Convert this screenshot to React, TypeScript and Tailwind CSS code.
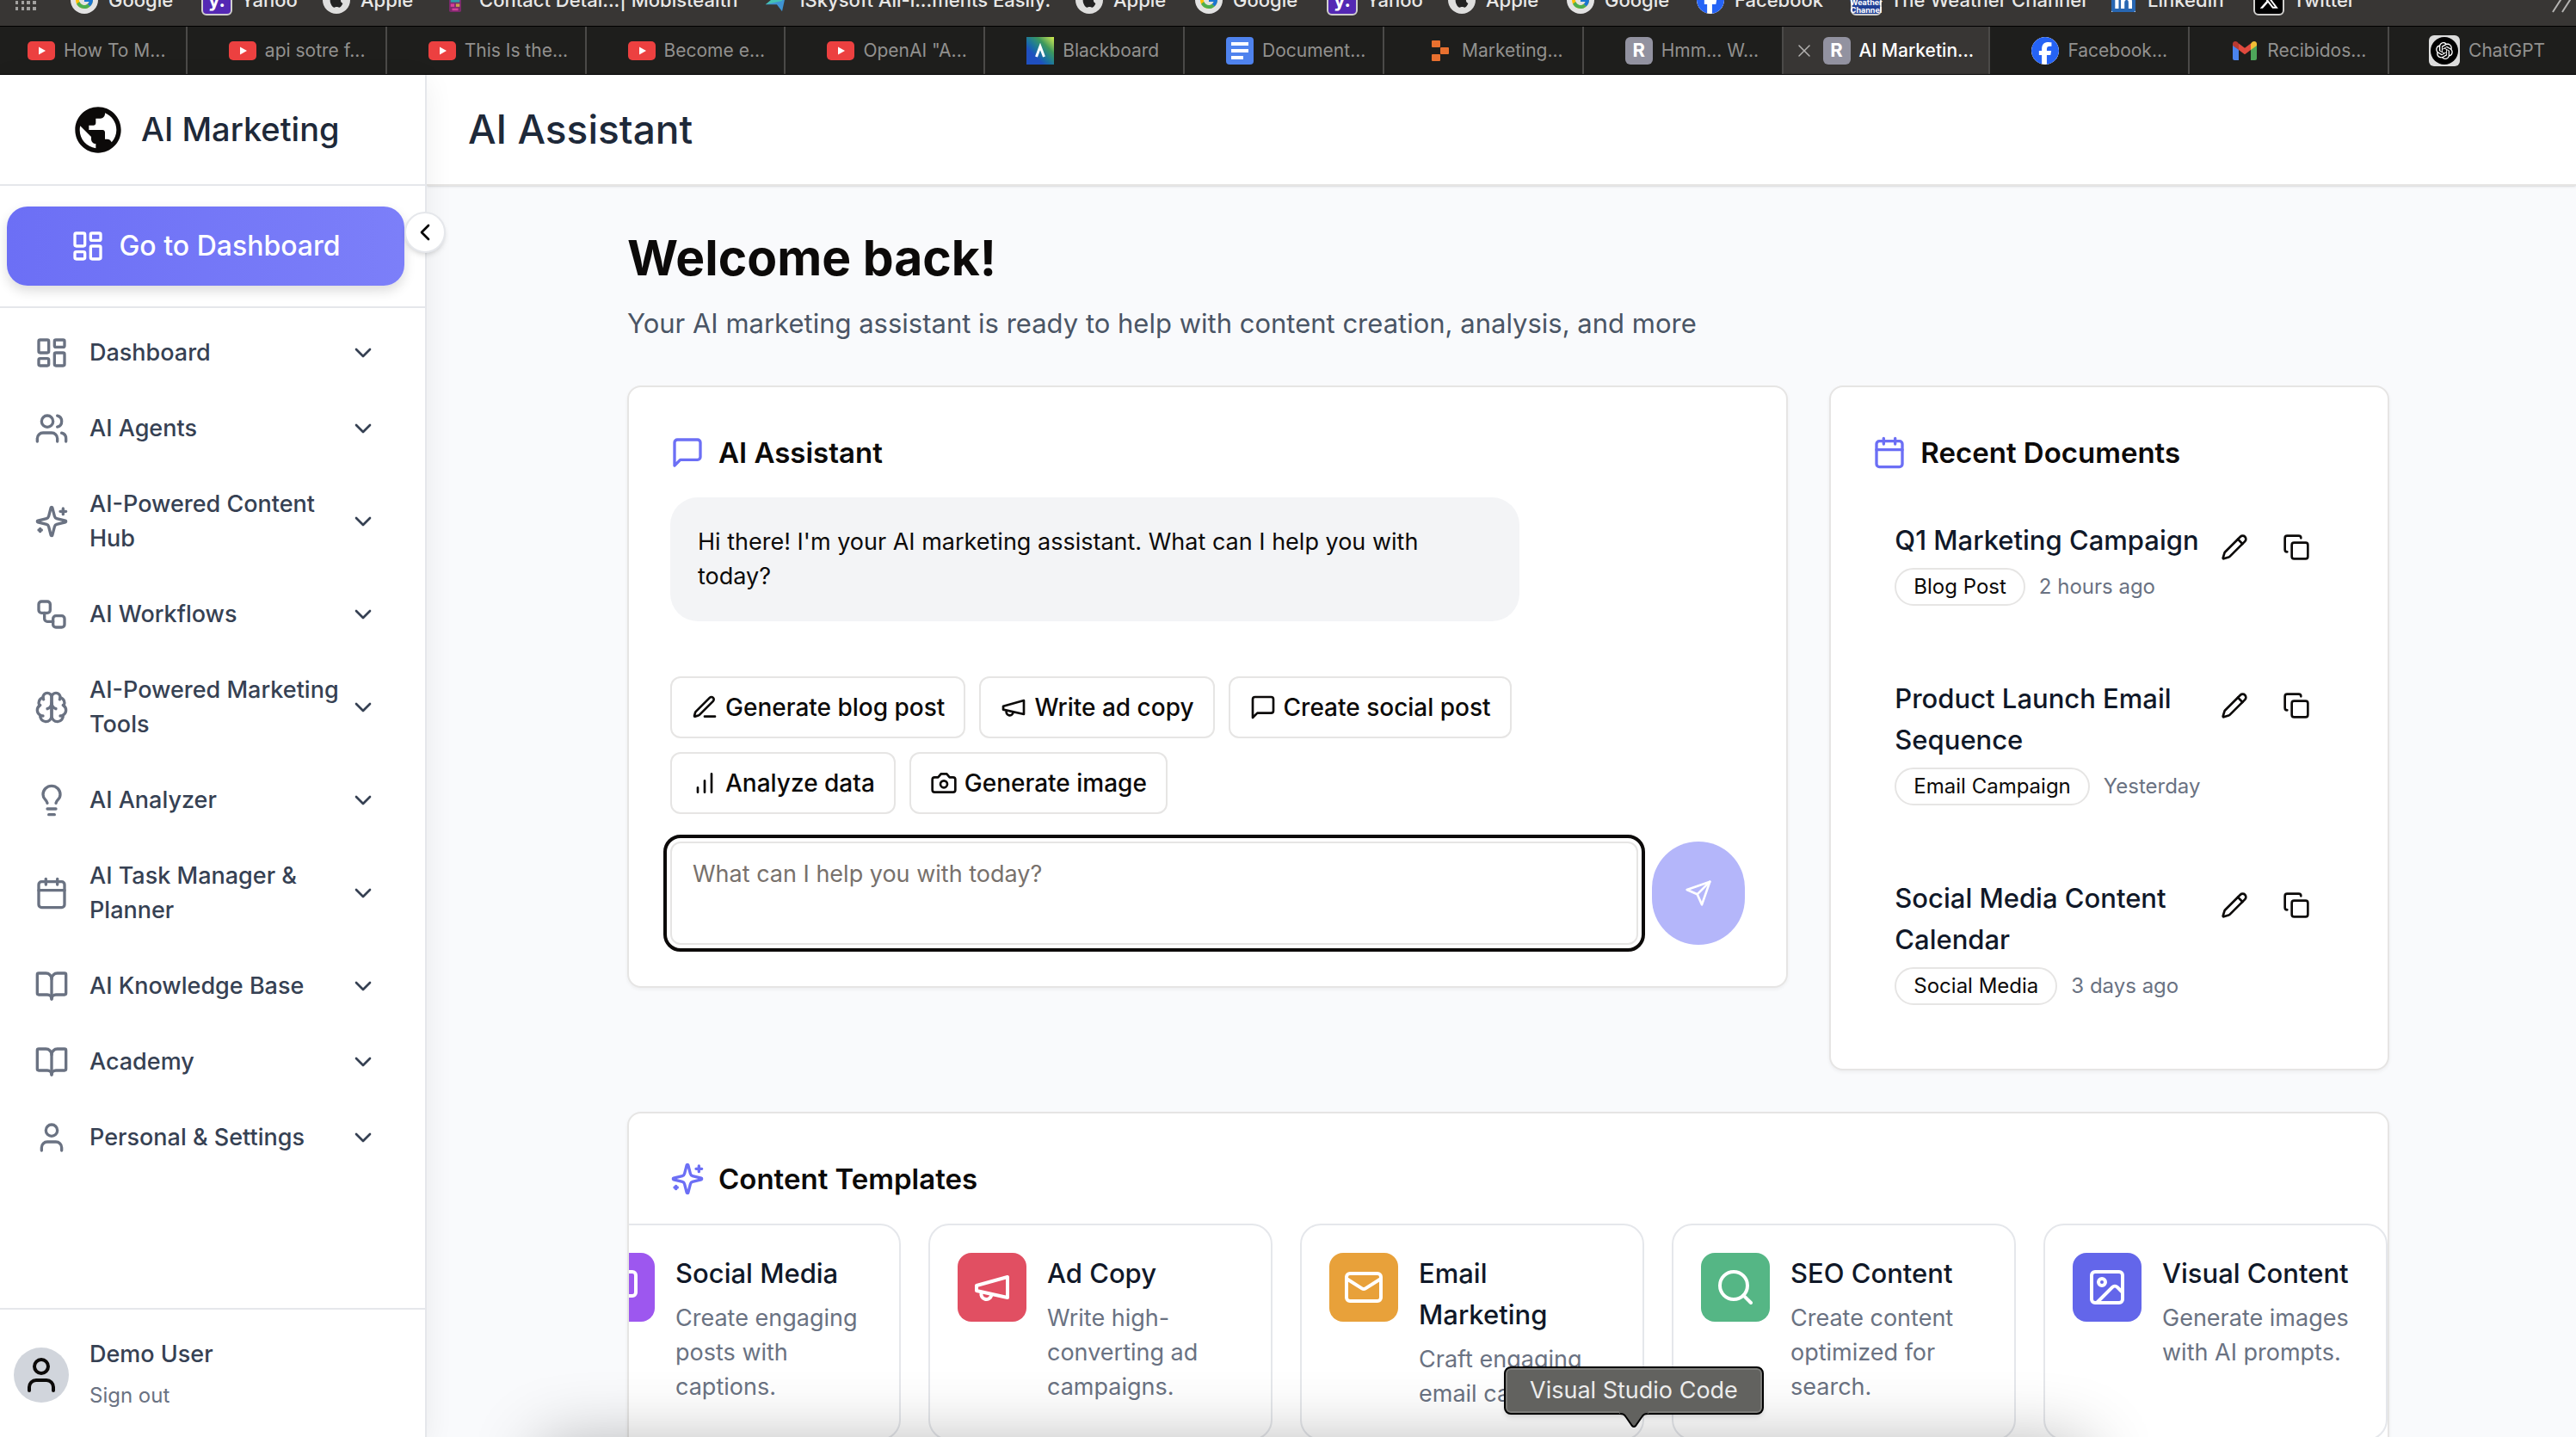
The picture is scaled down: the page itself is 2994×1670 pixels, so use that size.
import React from "react";
import {
  Calendar,
  ChevronDown,
  ChevronLeft,
  BookOpen,
  Copy,
  Image as ImageIcon,
  LayoutDashboard,
  Lightbulb,
  Pencil,
  Search,
  User,
  Users,
  Workflow,
  X,
} from "lucide-react";
import { FcGoogle } from "react-icons/fc";
import { FaApple, FaFacebook, FaLinkedin, FaXTwitter } from "react-icons/fa6";
import { MdPublic } from "react-icons/md";
import { RiOpenaiFill } from "react-icons/ri";

type IconProps = { className?: string };
type IconType = React.ComponentType<IconProps>;

/* ---------- line icons ---------- */

function Line({ className, children }: { className?: string; children: React.ReactNode }) {
  return (
    <svg
      viewBox="0 0 24 24"
      fill="none"
      stroke="currentColor"
      strokeWidth={2}
      strokeLinecap="round"
      strokeLinejoin="round"
      aria-hidden="true"
      className={className}
    >
      {children}
    </svg>
  );
}

const Sparkles: IconType = ({ className }) => (
  <Line className={className}>
    <path d="M9.937 15.5A2 2 0 0 0 8.5 14.063l-6.135-1.582a.5.5 0 0 1 0-.962L8.5 9.936A2 2 0 0 0 9.937 8.5l1.582-6.135a.5.5 0 0 1 .963 0L14.063 8.5A2 2 0 0 0 15.5 9.937l6.135 1.581a.5.5 0 0 1 0 .964L15.5 14.063a2 2 0 0 0-1.437 1.437l-1.582 6.135a.5.5 0 0 1-.963 0z" />
    <path d="M20 3v4M22 5h-4M4 17v2M5 18H3" />
  </Line>
);

const Brain: IconType = ({ className }) => (
  <Line className={className}>
    <path d="M12 5a3 3 0 1 0-5.997.125 4 4 0 0 0-2.526 5.77 4 4 0 0 0 .556 6.588A4 4 0 1 0 12 18Z" />
    <path d="M12 5a3 3 0 1 1 5.997.125 4 4 0 0 1 2.526 5.77 4 4 0 0 1-.556 6.588A4 4 0 1 1 12 18Z" />
    <path d="M15 13a4.5 4.5 0 0 1-3-4 4.5 4.5 0 0 1-3 4" />
    <path d="M17.599 6.5a3 3 0 0 0 .399-1.375M6.003 5.125A3 3 0 0 0 6.401 6.5M3.477 10.896a4 4 0 0 1 .585-.396M19.938 10.5a4 4 0 0 1 .585.396M6 18a4 4 0 0 1-1.967-.516M19.967 17.484A4 4 0 0 1 18 18" />
  </Line>
);

const Message: IconType = ({ className }) => (
  <Line className={className}>
    <path d="M21 15a2 2 0 0 1-2 2H7l-4 4V5a2 2 0 0 1 2-2h14a2 2 0 0 1 2 2z" />
  </Line>
);

const Megaphone: IconType = ({ className }) => (
  <Line className={className}>
    <path d="m3 11 18-5v12L3 14v-3z" />
    <path d="M11.6 16.8a3 3 0 1 1-5.8-1.6" />
  </Line>
);

const PenLine: IconType = ({ className }) => (
  <Line className={className}>
    <path d="M12 20h9" />
    <path d="M16.376 3.622a1 1 0 0 1 3.002 3.002L7.368 18.635a2 2 0 0 1-.855.506l-2.872.838a.5.5 0 0 1-.62-.62l.838-2.872a2 2 0 0 1 .506-.854z" />
  </Line>
);

const Bars: IconType = ({ className }) => (
  <Line className={className}>
    <path d="M12 20V10M18 20V4M6 20v-4" />
  </Line>
);

const Camera: IconType = ({ className }) => (
  <Line className={className}>
    <path d="M14.5 4h-5L7 7H4a2 2 0 0 0-2 2v9a2 2 0 0 0 2 2h16a2 2 0 0 0 2-2V9a2 2 0 0 0-2-2h-3l-2.5-3z" />
    <circle cx="12" cy="13" r="3" />
  </Line>
);

const Send: IconType = ({ className }) => (
  <Line className={className}>
    <path d="m22 2-7 20-4-9-9-4Z" />
    <path d="M22 2 11 13" />
  </Line>
);

const Mail: IconType = ({ className }) => (
  <Line className={className}>
    <rect width="20" height="16" x="2" y="4" rx="2" />
    <path d="m22 7-8.97 5.7a1.94 1.94 0 0 1-2.06 0L2 7" />
  </Line>
);

/* ---------- browser favicons ---------- */

const GoogleMark = () => (
  <span className="flex size-8 items-center justify-center rounded-full bg-[#e3e3e3]">
    <FcGoogle className="size-6" />
  </span>
);
const YahooMark = () => (
  <span className="flex size-9 items-center justify-center rounded-md border-2 border-[#d0cfcd] bg-[#5428b4] text-[22px] font-bold text-white">
    y.
  </span>
);
const AppleMark = () => (
  <span className="flex size-8 items-center justify-center rounded-full bg-[#dededd] text-[#222]">
    <FaApple className="size-5" />
  </span>
);
const PhoneMark = () => (
  <svg viewBox="0 0 18 32" className="h-7 w-[18px]" aria-hidden="true">
    <rect x="1" width="16" height="32" rx="2" fill="#7a2a6b" />
    <rect x="3" y="4" width="12" height="15" fill="#2e9aa8" />
    <rect x="3" y="21" width="5" height="4" fill="#d63f9a" />
    <rect x="10" y="21" width="5" height="4" fill="#c9a14a" />
    <rect x="5" y="27" width="8" height="3" fill="#d63f9a" />
  </svg>
);
const SkyMark = () => (
  <svg viewBox="0 0 32 32" className="size-7" aria-hidden="true">
    <path d="M2 22 30 4 24 31 17 22z" fill="#3f93d2" />
    <path d="M2 22 22 5l2 12z" fill="#45c3b4" />
  </svg>
);
const FacebookMark = () => (
  <span className="flex size-8 items-center justify-center overflow-hidden rounded-full bg-white">
    <FaFacebook className="size-8 text-[#2563f5]" />
  </span>
);
const WeatherMark = () => (
  <span className="flex size-9 flex-col items-center justify-end rounded-md border-2 border-[#d0cfcd] bg-[#1f3f96] text-[9px] leading-[9px] font-bold text-white">
    <span>The</span>
    <span>Weather</span>
    <span>Channel</span>
  </span>
);
const LinkedInMark = () => (
  <span className="flex size-7 items-center justify-center bg-white">
    <FaLinkedin className="size-8 shrink-0 text-[#2867b2]" />
  </span>
);
const XMark = () => (
  <span className="flex size-9 items-center justify-center rounded-md border-2 border-[#d0cfcd] bg-black text-white">
    <FaXTwitter className="size-6" />
  </span>
);
const YouTubeMark = () => (
  <svg viewBox="0 0 32 22" className="h-[22px] w-8" aria-hidden="true">
    <rect width="32" height="22" rx="5" fill="#ec4040" />
    <path d="M13 6.500 21 11l-8 4.500z" fill="#fff" />
  </svg>
);
const BlackboardMark = () => (
  <span className="flex size-8 items-center justify-center bg-linear-to-bl from-[#d5ee4a] via-[#3f9a5a] via-30% to-[#1f4fc0] to-70%">
    <svg viewBox="0 0 32 32" className="size-8" aria-hidden="true">
      <path d="M11.500 23 16 11l4.500 12" fill="none" stroke="#fff" strokeWidth="3" />
    </svg>
  </span>
);
const DocsMark = () => (
  <svg viewBox="0 0 32 32" className="size-8" aria-hidden="true">
    <rect width="32" height="32" rx="4" fill="#4f83ee" />
    <path d="M6 6h20v4H6zM6 14h20v4H6zM6 22h14v4H6z" fill="#fff" />
  </svg>
);
const PuzzleMark = () => (
  <svg viewBox="0 0 32 32" className="size-8" aria-hidden="true">
    <rect x="7" y="4" width="10" height="8" rx="1" fill="#e8702f" />
    <rect x="17" y="12" width="10" height="8" rx="1" fill="#e8702f" />
    <rect x="7" y="20" width="10" height="8" rx="1" fill="#e8702f" />
  </svg>
);
const LetterMark = () => (
  <span className="flex size-8 items-center justify-center rounded-md bg-[#9292a0] text-[22px] font-bold text-white">
    R
  </span>
);
const GmailMark = () => (
  <svg viewBox="0 0 32 32" className="size-8" aria-hidden="true">
    <path d="M2 8v17a2 2 0 0 0 2 2h5V13z" fill="#4a84ee" />
    <path d="M30 8v17a2 2 0 0 1-2 2h-5V13z" fill="#4ea65a" />
    <path d="M23 7.500V15l7-5V8c0-2.500-2.800-4-5-2.400z" fill="#f1bd36" />
    <path d="M2 8v2l7 5V7.500L7 5.600C4.800 4 2 5.500 2 8z" fill="#b93a32" />
    <path d="M9 15V7.500l7 5.200 7-5.200V15l-7 5.200z" fill="#e04a3e" />
  </svg>
);
const ChatGptMark = () => (
  <span className="flex size-9 items-center justify-center rounded-md bg-[#dcdcdc]">
    <span className="flex size-8 items-center justify-center rounded-full bg-black text-white">
      <RiOpenaiFill className="size-6" />
    </span>
  </span>
);

/* ---------- data ---------- */

const bookmarks: { label: string; Mark: React.ComponentType; width: string }[] = [
  { label: "Google", Mark: GoogleMark, width: "w-[154px]" },
  { label: "Yahoo", Mark: YahooMark, width: "w-[139px]" },
  { label: "Apple", Mark: AppleMark, width: "w-[138px]" },
  { label: "Contact Detai...| Mobistealth", Mark: PhoneMark, width: "w-[373px]" },
  { label: "iSkysoft All-i...ments Easily.", Mark: SkyMark, width: "w-[364px]" },
  { label: "Apple", Mark: AppleMark, width: "w-[139px]" },
  { label: "Google", Mark: GoogleMark, width: "w-[155px]" },
  { label: "Yahoo", Mark: YahooMark, width: "w-[139px]" },
  { label: "Apple", Mark: AppleMark, width: "w-[138px]" },
  { label: "Google", Mark: GoogleMark, width: "w-[151px]" },
  { label: "Facebook", Mark: FacebookMark, width: "w-[181px]" },
  { label: "The Weather Channel", Mark: WeatherMark, width: "w-[299px]" },
  { label: "LinkedIn", Mark: LinkedInMark, width: "w-[169px]" },
  { label: "Twitter", Mark: XMark, width: "w-[140px]" },
];

const tabs: { label: string; Mark: React.ComponentType; size?: string; active?: boolean }[] = [
  { label: "How To M...", Mark: YouTubeMark, size: "basis-[218px] pl-8" },
  { label: "api sotre f...", Mark: YouTubeMark },
  { label: "This Is the...", Mark: YouTubeMark },
  { label: "Become e...", Mark: YouTubeMark },
  { label: "OpenAI \"A...", Mark: YouTubeMark },
  { label: "Blackboard", Mark: BlackboardMark },
  { label: "Document...", Mark: DocsMark },
  { label: "Marketing...", Mark: PuzzleMark },
  { label: "Hmm... W...", Mark: LetterMark },
  { label: "AI Marketin...", Mark: LetterMark, size: "basis-[241px] pl-3", active: true },
  { label: "Facebook...", Mark: FacebookMark },
  { label: "Recibidos...", Mark: GmailMark },
  { label: "ChatGPT", Mark: ChatGptMark, size: "basis-[217px] pl-[46px]" },
];

const navItems: { label: string; Icon: IconType }[] = [
  { label: "Dashboard", Icon: LayoutDashboard },
  { label: "AI Agents", Icon: Users },
  { label: "AI-Powered Content Hub", Icon: Sparkles },
  { label: "AI Workflows", Icon: Workflow },
  { label: "AI-Powered Marketing Tools", Icon: Brain },
  { label: "AI Analyzer", Icon: Lightbulb },
  { label: "AI Task Manager & Planner", Icon: Calendar },
  { label: "AI Knowledge Base", Icon: BookOpen },
  { label: "Academy", Icon: BookOpen },
  { label: "Personal & Settings", Icon: User },
];

const prompts: { label: string; Icon: IconType }[] = [
  { label: "Generate blog post", Icon: PenLine },
  { label: "Write ad copy", Icon: Megaphone },
  { label: "Create social post", Icon: Message },
  { label: "Analyze data", Icon: Bars },
  { label: "Generate image", Icon: Camera },
];

const documents = [
  { title: "Q1 Marketing Campaign", kind: "Blog Post", when: "2 hours ago" },
  { title: "Product Launch Email Sequence", kind: "Email Campaign", when: "Yesterday" },
  { title: "Social Media Content Calendar", kind: "Social Media", when: "3 days ago" },
];

const templates: { title: string; text: string; Icon: IconType; color: string }[] = [
  { title: "Social Media", text: "Create engaging posts with captions.", Icon: Message, color: "bg-[#9d57ef]" },
  { title: "Ad Copy", text: "Write high-converting ad campaigns.", Icon: Megaphone, color: "bg-[#e14f62]" },
  { title: "Email Marketing", text: "Craft engaging email campaigns.", Icon: Mail, color: "bg-[#e8a13a]" },
  { title: "SEO Content", text: "Create content optimized for search.", Icon: Search, color: "bg-[#55b685]" },
  { title: "Visual Content", text: "Generate images with AI prompts.", Icon: ImageIcon, color: "bg-[#6366ea]" },
];

/* ---------- sections ---------- */

function BrowserChrome() {
  return (
    <div className="shrink-0 border-b border-black text-[22px]">
      <div className="flex h-[31px] flex-col justify-end overflow-hidden border-b border-black bg-[#383634]">
        <div className="flex h-[60px] shrink-0 items-center pr-1 pl-[18px] font-medium text-[#e8e8e7]">
          <svg viewBox="0 0 24 24" className="mr-[38px] size-6 shrink-0" fill="#a3a2a0" aria-hidden="true">
            <path d="M0 0h3v4H0zM7 0h3v4H7zM13 0h4v4h-4zM20 0h4v4h-4zM0 7h3v3H0zM7 7h3v3H7zM13 7h4v3h-4zM20 7h4v3h-4zM0 13h3v4H0zM7 13h3v4H7zM13 13h4v4h-4zM20 13h4v4h-4zM0 20h3v4H0zM7 20h3v4H7zM13 20h4v4h-4zM20 20h4v4h-4z" />
          </svg>
          {bookmarks.map(({ label, Mark, width }, i) => (
            <a key={i} href="#" className={"flex shrink-0 items-center gap-2.5 whitespace-nowrap " + width}>
              <span className="flex w-9 shrink-0 justify-center">
                <Mark />
              </span>
              {label}
            </a>
          ))}
          <svg viewBox="0 0 24 30" className="ml-auto h-[30px] w-6 shrink-0" fill="none" stroke="#b4b3b1" strokeWidth="2" aria-hidden="true">
            <path d="M1 1l9 14-9 14M12 1l9 14-9 14" />
          </svg>
        </div>
      </div>
      <div className="flex h-[55px] bg-[#1e1e1c] text-[#92918f]" role="tablist">
        {tabs.map(({ label, Mark, size, active }, i) => (
          <button
            key={i}
            type="button"
            role="tab"
            aria-selected={!!active}
            className={
              "flex min-w-0 grow items-center gap-2.5 border-r-2 border-[#4b4a48] whitespace-nowrap last:border-r-0 " +
              (size ?? "basis-[232px] pl-12") +
              (active ? " bg-[#383634] font-medium text-white" : "")
            }
          >
            {active && <X className="size-6 shrink-0 text-[#b4b3b1]" strokeWidth={1.5} />}
            <span className="shrink-0">
              <Mark />
            </span>
            <span className="text-[21px]">{label}</span>
          </button>
        ))}
      </div>
    </div>
  );
}

function Sidebar() {
  return (
    <aside className="relative z-10 flex w-[496px] shrink-0 flex-col border-r-2 border-gray-200 bg-white shadow-[0_8px_32px_rgba(0,0,0,0.07)]">
      <div className="flex h-[129px] shrink-0 items-center gap-[18px] border-b-2 border-gray-200 pl-[82px]">
        <MdPublic className="size-16 text-[#0c0a09]" />
        <span className="text-[38px] font-medium text-gray-800">AI Marketing</span>
      </div>
      <div className="border-b-2 border-gray-200 py-6 pr-6 pl-2">
        <button
          type="button"
          className="flex h-[92px] w-full items-center justify-center gap-4 rounded-3xl bg-linear-to-r from-[#6c6ff5] to-[#7c7ff9] text-[32px] font-medium text-white shadow-[0_6px_14px_rgba(0,0,0,0.14)]"
        >
          <LayoutDashboard className="size-10" />
          Go to Dashboard
        </button>
      </div>
      <button
        type="button"
        aria-label="Collapse sidebar"
        className="absolute top-[159px] -right-6 flex size-12 items-center justify-center rounded-full border-2 border-gray-200 bg-white text-black shadow-md"
      >
        <ChevronLeft className="size-8" />
      </button>
      <nav className="flex flex-1 flex-col gap-2 pt-3 pr-14 pl-10">
        {navItems.map(({ label, Icon }) => (
          <button
            key={label}
            type="button"
            className="flex items-center gap-6 py-5 text-left text-[27px] leading-10 font-medium text-gray-700"
          >
            <Icon className="size-10 shrink-0 text-gray-500" />
            <span className="-mr-6 flex-1">{label}</span>
            <ChevronDown className="size-8 shrink-0" />
          </button>
        ))}
      </nav>
      <div className="flex h-[150px] items-center gap-6 border-t-2 border-gray-200 pt-1 pl-4">
        <span className="flex size-16 items-center justify-center rounded-full bg-gray-300 text-[#0c0a09]">
          <User className="size-12" />
        </span>
        <div className="flex flex-col items-start gap-2">
          <span className="text-[27px] leading-10 font-medium text-gray-700">Demo User</span>
          <button type="button" className="text-[24px] leading-10 text-gray-500">
            Sign out
          </button>
        </div>
      </div>
    </aside>
  );
}

const cardClass = "rounded-2xl border-2 border-[#e6e5e4] bg-white shadow-[0_2px_4px_rgba(0,0,0,0.05)]";

function CardTitle({ Icon, children }: { Icon: IconType; children: React.ReactNode }) {
  return (
    <h2 className="flex items-center gap-4 text-[33px] leading-[56px] font-semibold">
      <Icon className="size-10 text-[#6c6ff5]" />
      {children}
    </h2>
  );
}

function AssistantCard() {
  return (
    <section className={"col-span-2 p-12 " + cardClass}>
      <CardTitle Icon={Message}>AI Assistant</CardTitle>
      <div className="mt-6 pr-4">
        <p className="w-4/5 rounded-4xl bg-gray-100 p-8 text-[27px] leading-10">
          Hi there! I'm your AI marketing assistant. What can I help you with today?
        </p>
      </div>
      <div className="mt-16 flex max-w-[1100px] flex-wrap gap-4">
        {prompts.map(({ label, Icon }) => (
          <button
            key={label}
            type="button"
            className="flex h-[72px] items-center gap-2 rounded-xl border-2 border-[#e6e5e4] bg-white px-[22px] text-[28px] font-medium"
          >
            <Icon className="size-8" />
            {label}
          </button>
        ))}
      </div>
      <form className="mt-8 flex gap-4" onSubmit={(e) => e.preventDefault()}>
        <textarea
          aria-label="Message"
          placeholder="What can I help you with today?"
          className="h-[120px] flex-1 resize-none rounded-xl border-2 border-[#e6e5e4] px-6 py-4 text-[27px] leading-10 outline-4 outline-offset-4 outline-[#0c0a09] placeholder:text-[#78716c]"
        />
        <button
          type="submit"
          aria-label="Send"
          className="flex w-[108px] items-center justify-center rounded-full bg-[#b4b6fa] text-white"
        >
          <Send className="size-8" />
        </button>
      </form>
    </section>
  );
}

function DocumentsCard() {
  return (
    <section className={"p-12 " + cardClass}>
      <CardTitle Icon={Calendar}>Recent Documents</CardTitle>
      <ul className="mt-6 flex flex-col gap-8">
        {documents.map((d) => (
          <li key={d.title} className="flex items-start border-2 border-transparent p-6">
            <div className="min-w-0 flex-1">
              <h3 className="text-[31px] leading-12 font-medium text-gray-900">{d.title}</h3>
              <div className="mt-2 flex items-center gap-4 text-[24px]">
                <span className="rounded-full border-2 border-[#e6e5e4] px-5 leading-10">{d.kind}</span>
                <span className="text-gray-500">{d.when}</span>
              </div>
            </div>
            <div className="flex gap-2">
              <button type="button" aria-label={"Edit " + d.title} className="flex size-16 items-center justify-center">
                <Pencil className="size-8" />
              </button>
              <button type="button" aria-label={"Copy " + d.title} className="flex size-16 items-center justify-center">
                <Copy className="size-8" />
              </button>
            </div>
          </li>
        ))}
      </ul>
    </section>
  );
}

function TemplatesCard() {
  return (
    <section className={"mt-12 overflow-hidden pt-12 pb-12 " + cardClass}>
      <div className="px-12">
        <CardTitle Icon={Sparkles}>Content Templates</CardTitle>
      </div>
      <div className="mt-6 flex justify-end gap-8 overflow-hidden">
        {templates.map(({ title, text, Icon, color }) => (
          <article key={title} className="flex w-[400px] shrink-0 gap-6 rounded-3xl border-2 border-gray-200 bg-white p-8">
            <span className={"flex size-20 shrink-0 items-center justify-center rounded-2xl text-white " + color}>
              <Icon className="size-12" />
            </span>
            <div className="min-w-0">
              <h3 className="text-[31px] leading-12 font-medium text-gray-900">{title}</h3>
              <p className="mt-2 text-[27px] leading-10 text-gray-500">{text}</p>
            </div>
          </article>
        ))}
      </div>
    </section>
  );
}

function DockTooltip() {
  return (
    <div
      role="tooltip"
      className="absolute bottom-[26px] left-[1748px] z-30 flex h-14 items-center rounded-lg border-2 border-black bg-[#62625f] px-7 text-[27px] whitespace-nowrap text-[#ececec] shadow-md inset-ring-2 inset-ring-[#7d7d7a]"
    >
      Visual Studio Code
      <svg viewBox="0 0 34 20" className="absolute top-[50px] left-1/2 h-5 w-[34px] -translate-x-1/2" aria-hidden="true">
        <path d="M0 0h34v3c-5 0-6 1-8 4l-7 10q-2 2-4 0L8 7C6 4 5 3 0 3z" fill="#62625f" />
        <path d="M1 3c4 0 5 1 7 4l7 10q2 2 4 0l7-10c2-3 3-4 7-4" fill="none" stroke="#000" strokeWidth="2" />
      </svg>
    </div>
  );
}

export default function App() {
  return (
    <div className="relative flex h-screen flex-col overflow-hidden bg-gray-50 font-['Inter',sans-serif] text-[#0c0a09]">
      <BrowserChrome />
      <div className="flex min-h-0 flex-1">
        <Sidebar />
        <div className="flex min-w-0 flex-1 flex-col bg-[#f9fafc]">
          <header className="flex h-[129px] shrink-0 items-center border-b-2 border-[#e6e5e4] bg-white pl-12 shadow-sm">
            <h1 className="text-[46px] font-medium text-gray-800">AI Assistant</h1>
          </header>
          <main className="min-h-0 flex-1 overflow-hidden pt-12 pl-4">
            <div className="mx-auto max-w-[2048px]">
              <h2 className="text-[57px] leading-[72px] font-bold">Welcome back!</h2>
              <p className="mt-4 text-[31px] leading-12 text-gray-600">
                Your AI marketing assistant is ready to help with content creation, analysis, and more
              </p>
              <div className="mt-12 grid grid-cols-3 items-start gap-12">
                <AssistantCard />
                <DocumentsCard />
              </div>
              <TemplatesCard />
            </div>
          </main>
        </div>
      </div>
      <div className="pointer-events-none absolute top-full right-[19%] left-[21%] z-20 mt-2 h-24 shadow-[0_0_80px_rgba(0,0,0,0.3)]" />
      <DockTooltip />
    </div>
  );
}
